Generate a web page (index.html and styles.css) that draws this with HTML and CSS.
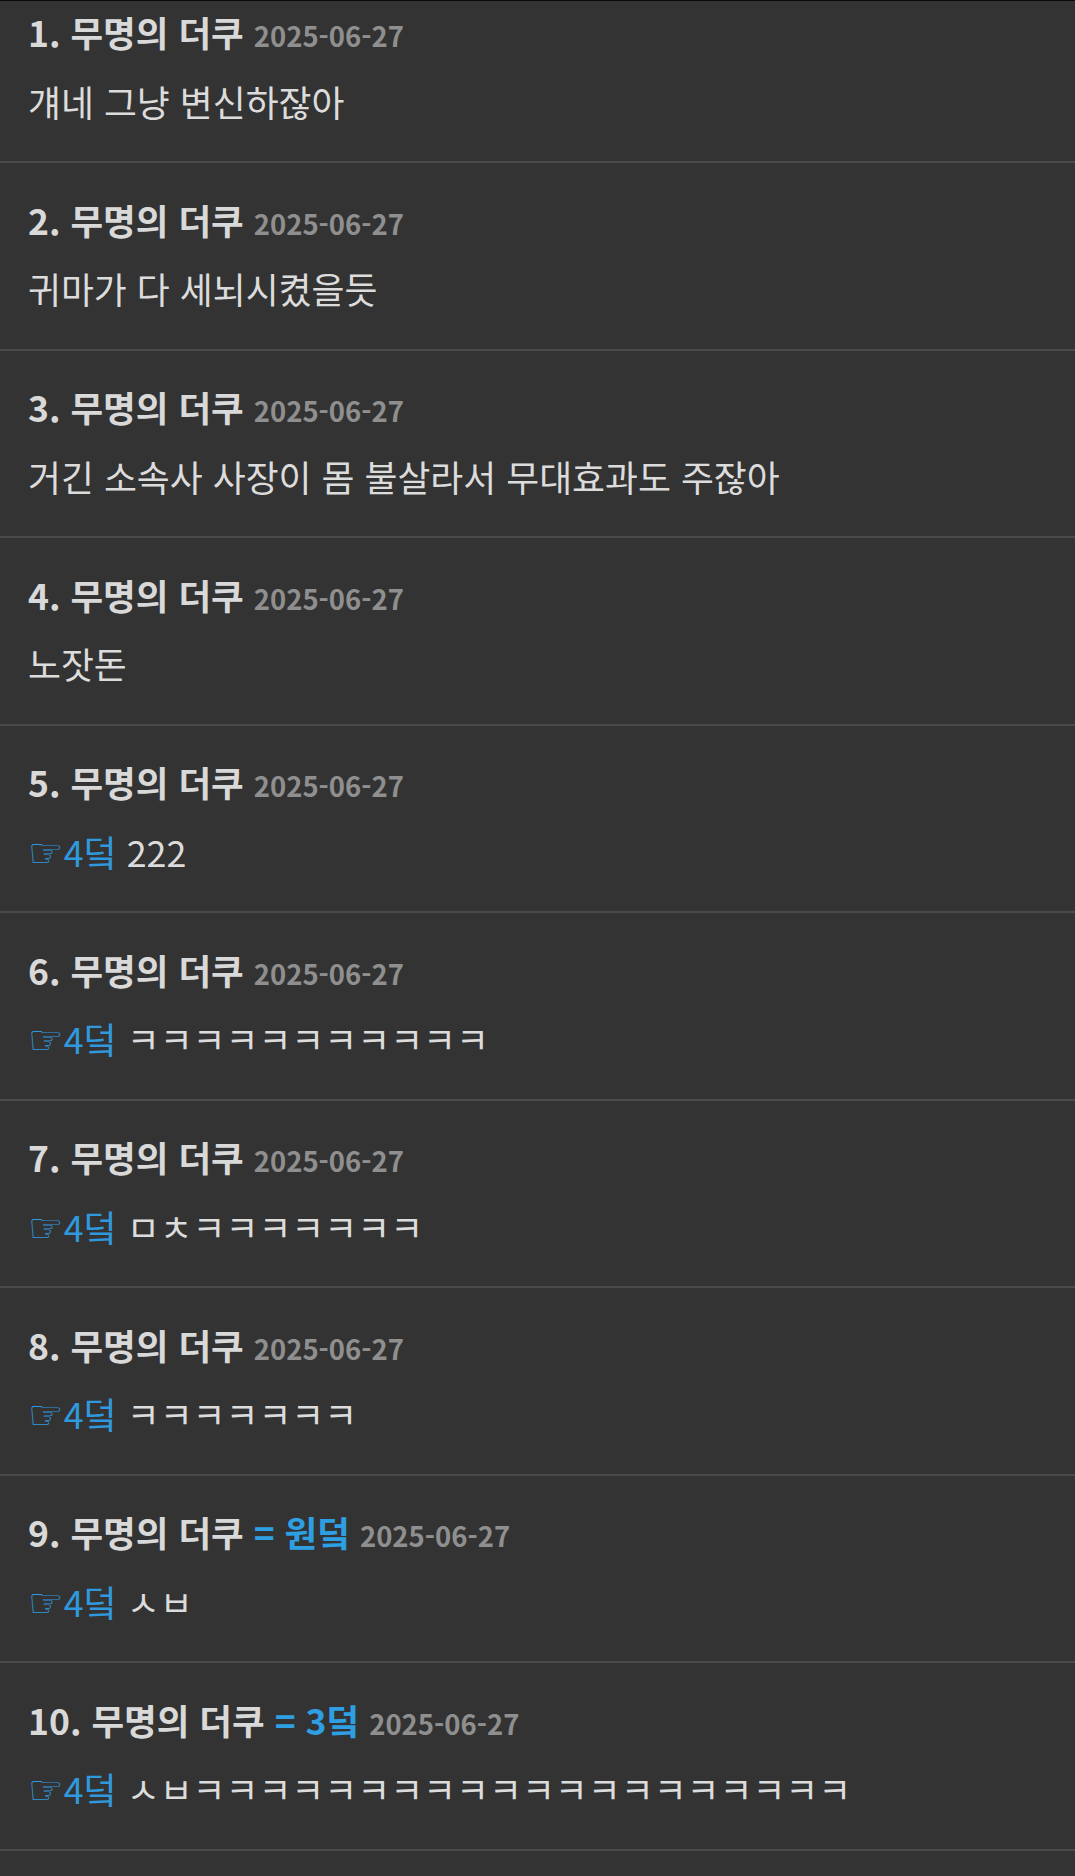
FILE: index.html
```html
<!DOCTYPE html>
<html lang="ko">
<head>
<meta charset="utf-8">
<link rel="stylesheet" href="styles.css">
</head>
<body>
<div class="viewport">
  <ul class="comments">
    <li class="comment">
      <div class="head"><span class="name">1. 무명의 더쿠</span><span class="date">2025-06-27</span></div>
      <div class="text">걔네 그냥 변신하잖아</div>
    </li>
    <li class="comment">
      <div class="head"><span class="name">2. 무명의 더쿠</span><span class="date">2025-06-27</span></div>
      <div class="text">귀마가 다 세뇌시켰을듯</div>
    </li>
    <li class="comment">
      <div class="head"><span class="name">3. 무명의 더쿠</span><span class="date">2025-06-27</span></div>
      <div class="text">거긴 소속사 사장이 몸 불살라서 무대효과도 주잖아</div>
    </li>
    <li class="comment">
      <div class="head"><span class="name">4. 무명의 더쿠</span><span class="date">2025-06-27</span></div>
      <div class="text">노잣돈</div>
    </li>
    <li class="comment">
      <div class="head"><span class="name">5. 무명의 더쿠</span><span class="date">2025-06-27</span></div>
      <div class="text"><span class="ref"><span class="hand">☞</span>4덬</span> 222</div>
    </li>
    <li class="comment">
      <div class="head"><span class="name">6. 무명의 더쿠</span><span class="date">2025-06-27</span></div>
      <div class="text"><span class="ref"><span class="hand">☞</span>4덬</span> ㅋㅋㅋㅋㅋㅋㅋㅋㅋㅋㅋ</div>
    </li>
    <li class="comment">
      <div class="head"><span class="name">7. 무명의 더쿠</span><span class="date">2025-06-27</span></div>
      <div class="text"><span class="ref"><span class="hand">☞</span>4덬</span> ㅁㅊㅋㅋㅋㅋㅋㅋㅋ</div>
    </li>
    <li class="comment">
      <div class="head"><span class="name">8. 무명의 더쿠</span><span class="date">2025-06-27</span></div>
      <div class="text"><span class="ref"><span class="hand">☞</span>4덬</span> ㅋㅋㅋㅋㅋㅋㅋ</div>
    </li>
    <li class="comment">
      <div class="head"><span class="name">9. 무명의 더쿠</span><span class="op">= 원덬</span><span class="date">2025-06-27</span></div>
      <div class="text"><span class="ref"><span class="hand">☞</span>4덬</span> ㅅㅂ</div>
    </li>
    <li class="comment">
      <div class="head"><span class="name">10. 무명의 더쿠</span><span class="op">= 3덬</span><span class="date">2025-06-27</span></div>
      <div class="text"><span class="ref"><span class="hand">☞</span>4덬</span> ㅅㅂㅋㅋㅋㅋㅋㅋㅋㅋㅋㅋㅋㅋㅋㅋㅋㅋㅋㅋㅋㅋ</div>
    </li>
  </ul>
</div>
</body>
</html>
```
FILE: styles.css
```css
html, body {
  margin: 0;
  padding: 0;
  background: #333333;
}
body {
  font-family: "Noto Sans CJK KR", "Noto Sans", sans-serif;
  color: #dcdcdc;
}
.viewport {
  border-top: 1px solid #0a0a0a;
  height: 1875px;
  overflow: hidden;
}
.comments {
  list-style: none;
  margin: -25.5px 0 0 0;
  padding: 0;
}
.comment {
  padding: 22.5px 28px 26.5px 28px;
  border-bottom: 2px solid #4a4a4a;
}
.head {
  height: 67px;
  line-height: 67px;
  margin-bottom: 2.5px;
  white-space: nowrap;
}
.name {
  font-size: 35.5px;
  font-weight: 700;
  color: #d9d9d9;
}
.op {
  margin-left: 10px;
  font-size: 35.5px;
  font-weight: 700;
  color: #2e9fe2;
}
.date {
  margin-left: 10px;
  font-size: 27.5px;
  font-weight: 700;
  color: #8f8f8f;
}
.text {
  height: 67px;
  line-height: 67px;
  font-size: 35.8px;
  white-space: nowrap;
}
.ref {
  color: #3098dc;
}
.hand {
  font-family: "DejaVu Sans", sans-serif;
  font-size: 40px;
}
```
